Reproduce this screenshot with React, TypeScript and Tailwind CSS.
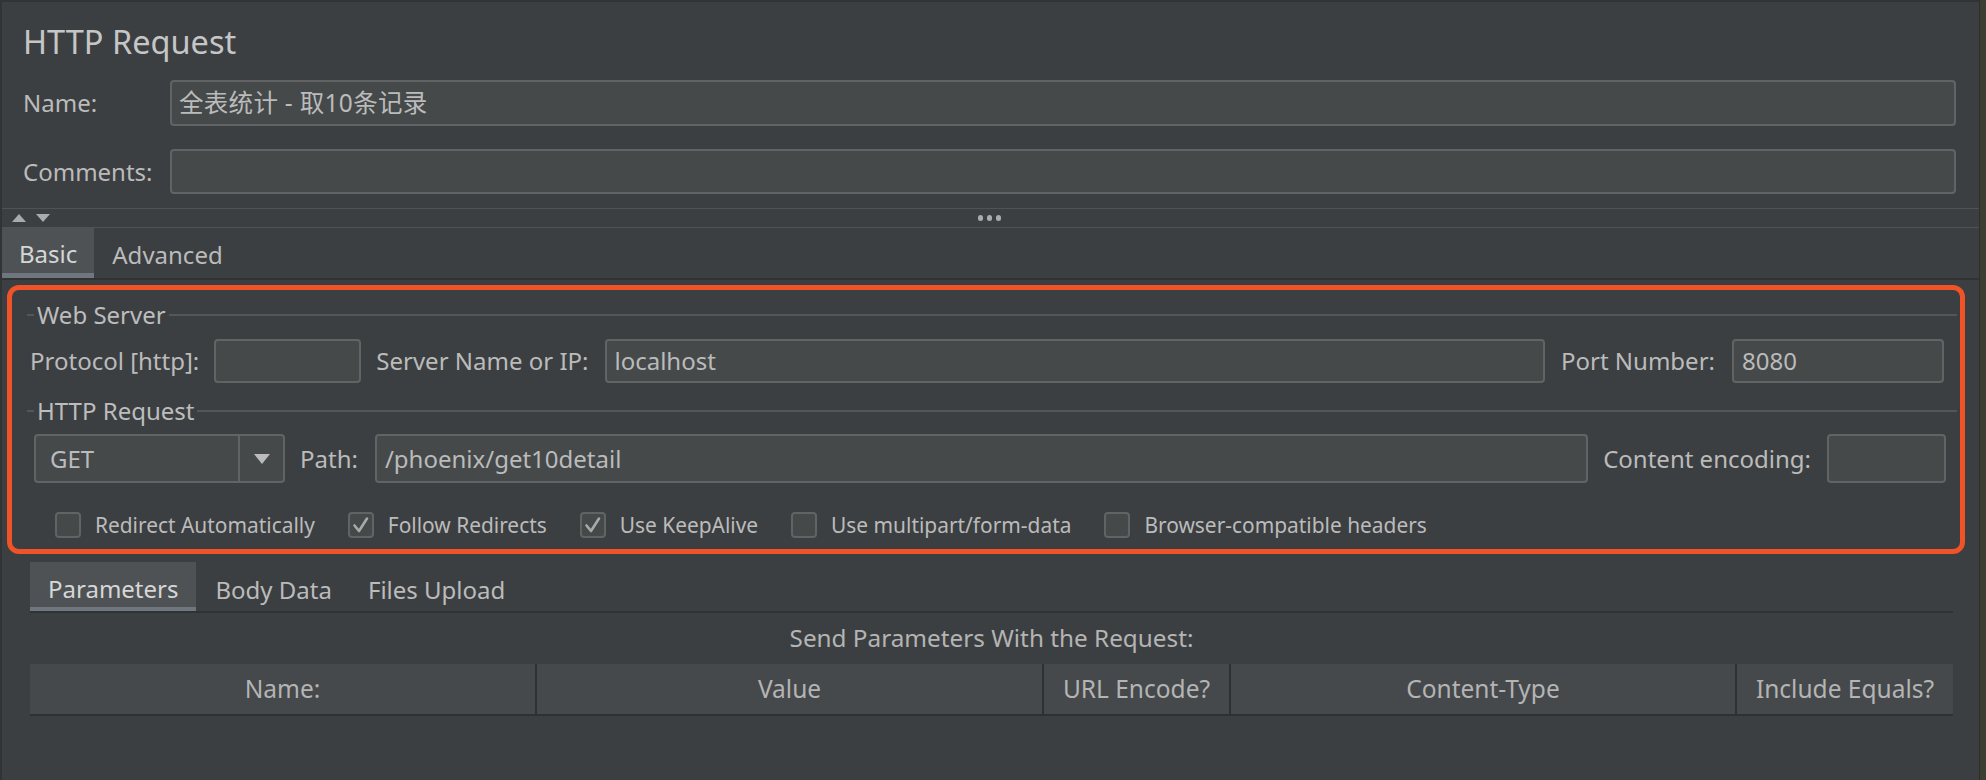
import React from "react";

const Input = ({ value, className = "" }: { value?: string; className?: string }) => (
  <div className={`flex h-full items-center rounded-[4px] border-2 border-[#616365] bg-[#45494a] text-[#bbbbbb] ${className}`}>
    {value}
  </div>
);

const Legend = ({ title }: { title: string }) => (
  <div className="flex h-[28px] items-center pl-[15px] pr-[3px]">
    <div className="h-[2px] w-[7px] bg-[#54575a]" />
    <span className="px-[3px] text-[24px] leading-[28px] text-[#bdbdbd]">{title}</span>
    <div className="h-[2px] flex-1 bg-[#54575a]" />
  </div>
);

const Check = ({ label, checked }: { label: string; checked?: boolean }) => (
  <div className="flex items-center gap-[14px]">
    <div className="flex h-[26px] w-[26px] items-center justify-center rounded-[4px] border-2 border-[#616365] bg-[#45494a]">
      {checked && (
        <svg width="22" height="22" viewBox="0 0 22 22">
          <path d="M4.5 11.5 L9 17 L17 4.5" fill="none" stroke="#a9a9a9" strokeWidth="2.6" strokeLinecap="round" strokeLinejoin="round" />
        </svg>
      )}
    </div>
    <span className="text-[20.9px] leading-[26px] text-[#bbbbbb]">{label}</span>
  </div>
);

const App = () => {
  const checks = [
    { label: "Redirect Automatically", checked: false },
    { label: "Follow Redirects", checked: true },
    { label: "Use KeepAlive", checked: true },
    { label: "Use multipart/form-data", checked: false },
    { label: "Browser-compatible headers", checked: false },
  ];
  const columns = ["Name:", "Value", "URL Encode?", "Content-Type", "Include Equals?"];

  return (
    <div className="flex h-[780px] w-[1986px] overflow-hidden bg-[#3c3f41] font-['Noto_Sans','Noto_Sans_CJK_SC',sans-serif] text-[#bbbbbb]">
      <div className="flex flex-1 flex-col border-t-2 border-l-2 border-r border-[#313335] border-r-[#2b2d2e]">
        {/* title */}
        <div className="pl-[21px] pt-[20px] text-[32.5px] leading-[40px] text-[#c6c6c6]">HTTP Request</div>

        <div className="mt-[18px] flex h-[46px] items-center pl-[21px] pr-[23px]">
          <span className="w-[147px] text-[24px]">Name:</span>
          <Input className="flex-1 pl-[7px] text-[24.5px] tracking-[0.3px]" value="全表统计 - 取10条记录" />
        </div>
        <div className="mt-[23px] flex h-[45px] items-center pl-[21px] pr-[23px]">
          <span className="w-[147px] text-[24px]">Comments:</span>
          <Input className="flex-1" />
        </div>

        {/* splitter */}
        <div className="mt-[14px] flex h-[20px] items-center border-y border-[#505355]">
          <svg className="ml-[10px]" width="14" height="8" viewBox="0 0 14 8">
            <path d="M0 8 L7 0 L14 8 Z" fill="#a9abad" />
          </svg>
          <svg className="ml-[10px]" width="14" height="8" viewBox="0 0 14 8">
            <path d="M0 0 L14 0 L7 8 Z" fill="#a9abad" />
          </svg>
          <div className="ml-[928px] flex gap-[4px]">
            <div className="h-[6px] w-[5px] rounded-full bg-[#a9abad]" />
            <div className="h-[6px] w-[5px] rounded-full bg-[#a9abad]" />
            <div className="h-[6px] w-[5px] rounded-full bg-[#a9abad]" />
          </div>
        </div>

        {/* tabs */}
        <div className="flex h-[52px] border-b-2 border-[#303234]">
          <div className="flex items-center border-b-[5px] border-[#6f767d] bg-[#4e5254] px-[17px] pt-[7px] text-[24px] text-[#d6d6d6]">Basic</div>
          <div className="flex items-center px-[18px] pt-[4px] text-[24px] text-[#bbbbbb]">Advanced</div>
        </div>

        {/* highlighted basic panel */}
        <div className="ml-[5px] mr-[14px] mt-[5px] flex h-[269px] flex-col rounded-[12px] border-[5px] border-[#ef5327]">
          <div className="mt-[11px]">
            <Legend title="Web Server" />
          </div>
          <div className="mt-[10px] flex h-[44px] items-center pl-[18px] pr-[16px] text-[24px]">
            <span className="whitespace-nowrap">Protocol [http]:</span>
            <Input className="ml-[15px] w-[147px]" />
            <span className="ml-[15px] whitespace-nowrap">Server Name or IP:</span>
            <Input className="ml-[17px] flex-1 pl-[7px]" value="localhost" />
            <span className="ml-[16px] whitespace-nowrap">Port Number:</span>
            <Input className="ml-[17px] w-[212px] pl-[8px]" value="8080" />
          </div>
          <div className="mt-[14px]">
            <Legend title="HTTP Request" />
          </div>
          <div className="mt-[9px] flex h-[49px] items-center pl-[22px] pr-[14px] text-[24px]">
            <div className="flex h-full w-[251px] rounded-[4px] border-2 border-[#616365] bg-[#45494a]">
              <div className="flex flex-1 items-center pl-[14px]">GET</div>
              <div className="flex w-[45px] items-center justify-center border-l-2 border-[#616365]">
                <svg width="16" height="10" viewBox="0 0 16 10">
                  <path d="M0 0 L16 0 L8 10 Z" fill="#bbbbbb" />
                </svg>
              </div>
            </div>
            <span className="ml-[15px]">Path:</span>
            <Input className="ml-[17px] flex-1 pl-[8px]" value="/phoenix/get10detail" />
            <span className="ml-[15px] whitespace-nowrap">Content encoding:</span>
            <Input className="ml-[16px] w-[119px]" />
          </div>
          <div className="mt-[29px] flex items-center gap-[33px] pl-[43px]">
            {checks.map((c) => (
              <Check key={c.label} label={c.label} checked={c.checked} />
            ))}
          </div>
        </div>

        {/* parameters */}
        <div className="mt-[8px] flex flex-col pl-[28px] pr-[26px]">
          <div className="flex h-[51px] border-b-2 border-[#303234] text-[24px]">
            <div className="flex items-center border-b-[4px] border-[#6f767d] bg-[#4e5254] px-[18px] pt-[8px] text-[#d6d6d6]">Parameters</div>
            <div className="flex items-center px-[19px] pt-[6px]">Body Data</div>
            <div className="flex items-center px-[17px] pt-[6px]">Files Upload</div>
          </div>
          <div className="flex h-[51px] items-center justify-center text-[24.3px] text-[#b4b4b4]">Send Parameters With the Request:</div>
          <div className="grid h-[52px] grid-cols-[505px_507px_187px_506px_1fr] border-b-2 border-[#2e3032] bg-[#45494b] text-[24.5px] text-[#b4b4b4]">
            {columns.map((col, i) => (
              <div key={col} className={`flex items-center justify-center ${i > 0 ? "border-l-2 border-[#2e3032]" : ""}`}>
                {col}
              </div>
            ))}
          </div>
        </div>
      </div>
      <div className="w-[6px] bg-[#3d3e32]" />
    </div>
  );
};

export default App;
